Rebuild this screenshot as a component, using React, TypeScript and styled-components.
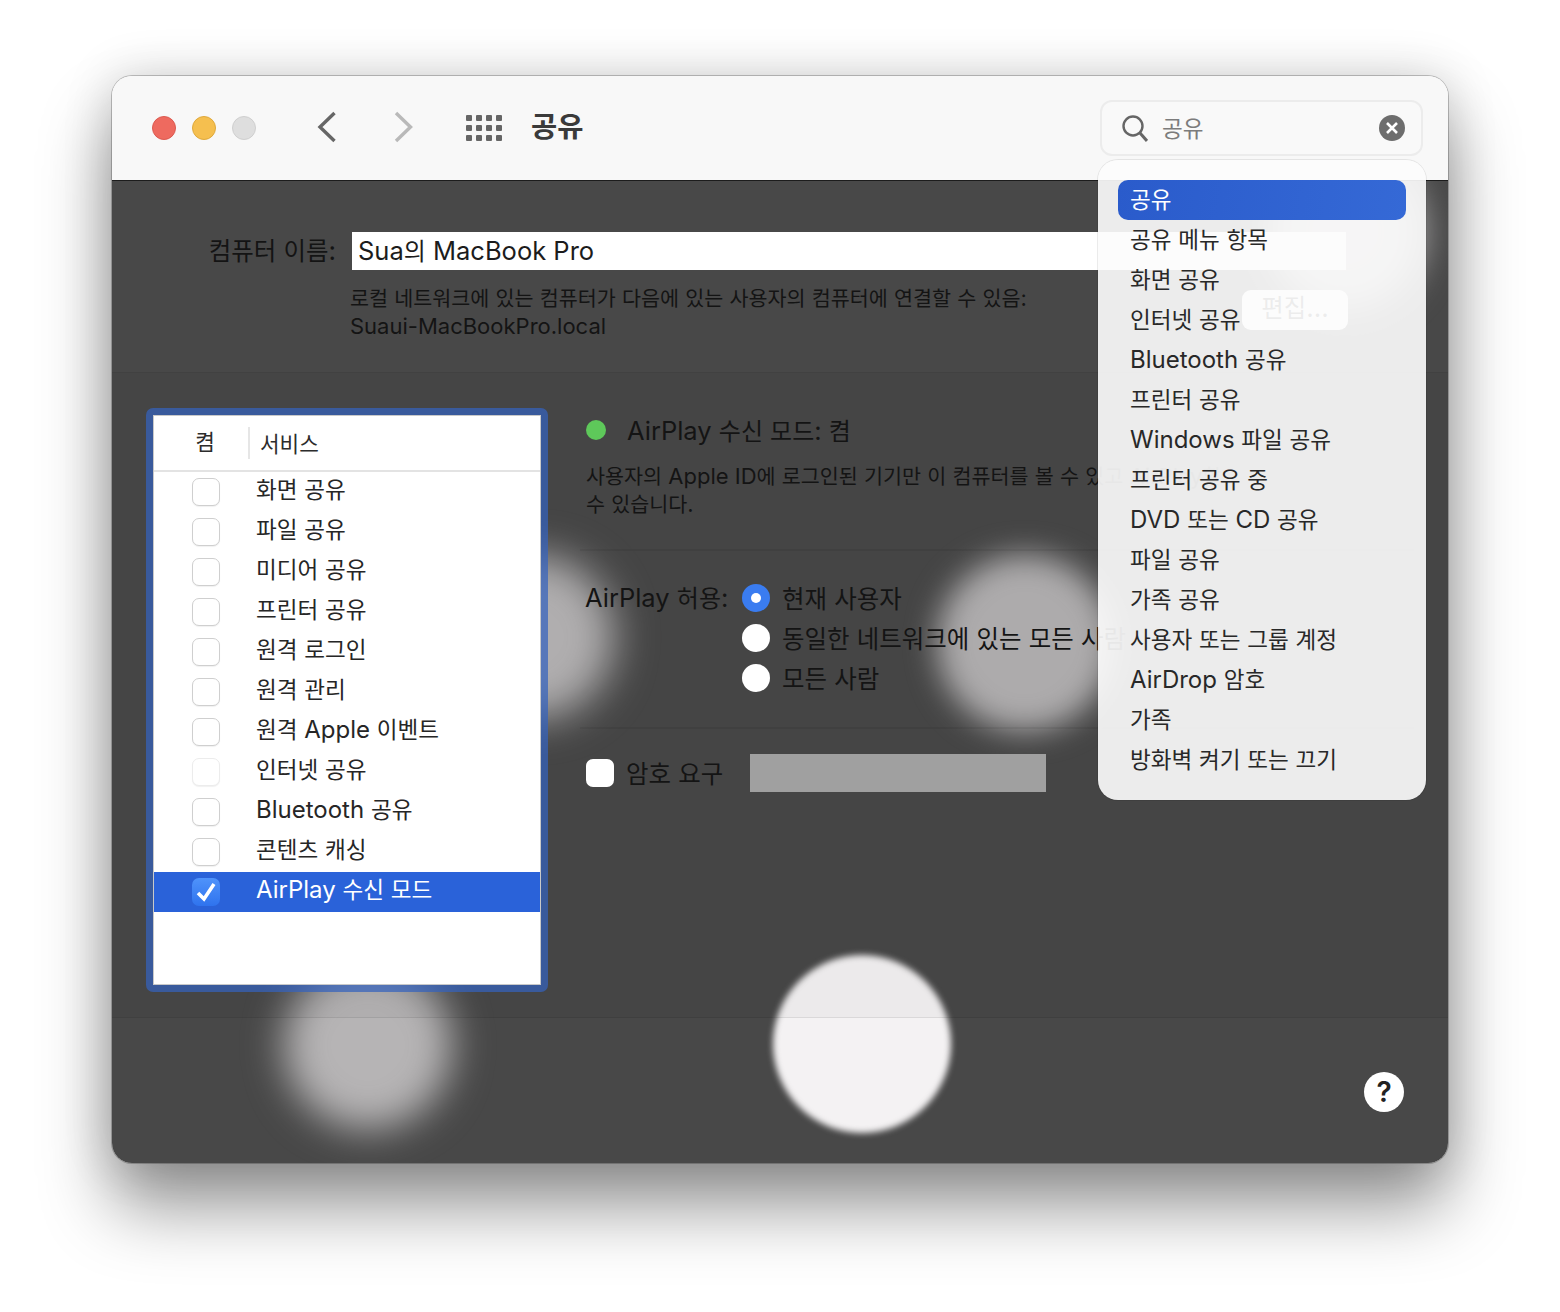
import React from 'react';
import styled, { createGlobalStyle } from 'styled-components';

const GlobalStyle = createGlobalStyle`
  html, body {
    margin: 0;
    padding: 0;
    background: #fff;
  }
  body {
    font-family: Inter, "Noto Sans CJK KR", sans-serif;
    color: #141414;
  }
`;

const Page = styled.div`
  width: 1560px;
  height: 1312px;
  padding: 76px 112px 0;
  box-sizing: border-box;
  overflow: hidden;
`;

const Window = styled.div`
  position: relative;
  width: 1336px;
  height: 1087px;
  border-radius: 20px;
  display: flex;
  flex-direction: column;
  box-shadow: 0 0 0 1px rgba(0, 0, 0, 0.22), 0 44px 70px rgba(0, 0, 0, 0.42), 0 0 50px rgba(0, 0, 0, 0.16);
`;

const TitleBar = styled.header`
  height: 105px;
  box-sizing: border-box;
  flex: none;
  display: flex;
  align-items: center;
  padding: 0 25px 0 40px;
  background: #f8f8f8;
  border-radius: 20px 20px 0 0;
  border-bottom: 1px solid #1c1c1c;
`;

const Lights = styled.div`
  display: flex;
  gap: 16px;
  margin-right: 61px;
`;

const Light = styled.span<{ $color: string; $edge: string }>`
  width: 24px;
  height: 24px;
  box-sizing: border-box;
  border-radius: 50%;
  background: ${(p) => p.$color};
  border: 1px solid ${(p) => p.$edge};
`;

const NavButton = styled.svg<{ $gap?: number }>`
  display: block;
  flex: none;
  margin: 0 0 2px ${(p) => p.$gap ?? 0}px;
`;

const GridIcon = styled.svg`
  display: block;
  flex: none;
  margin: 0 29px 1px 53px;
`;

const Title = styled.h1`
  margin: 0 0 2px;
  flex: 1;
  font-size: 28.5px;
  line-height: 40px;
  font-weight: 600;
  color: #3a3a3a;
`;

const SearchBox = styled.div`
  width: 323px;
  height: 56px;
  box-sizing: border-box;
  display: flex;
  align-items: center;
  padding: 0 16px 0 20px;
  border: 2px solid #ececec;
  border-radius: 12px;
  background: #f9f9f9;
`;

const SearchText = styled.span`
  flex: 1;
  margin-left: 14px;
  font-size: 24px;
  color: #7c7c7c;
`;

const ClearButton = styled.span`
  width: 26px;
  height: 26px;
  border-radius: 50%;
  background: #6d6d6d;
  display: flex;
  align-items: center;
  justify-content: center;
`;

const Body = styled.main`
  position: relative;
  flex: 1;
  display: flex;
  flex-direction: column;
  background: #484848;
  border-radius: 0 0 20px 20px;
  overflow: hidden;
`;

const Spot = styled.div<{ $x: number; $y: number; $r: number; $blur: number; $color: string }>`
  position: absolute;
  left: ${(p) => p.$x - p.$r}px;
  top: ${(p) => p.$y - p.$r}px;
  width: ${(p) => p.$r * 2}px;
  height: ${(p) => p.$r * 2}px;
  border-radius: 50%;
  background: ${(p) => p.$color};
  filter: blur(${(p) => p.$blur}px);
`;

const NameSection = styled.section`
  position: relative;
  height: 191px;
  flex: none;
  box-sizing: border-box;
  padding: 51px 0 0;
`;

const NameRow = styled.div`
  display: flex;
  align-items: center;
`;

const NameLabel = styled.label`
  width: 224px;
  text-align: right;
  font-size: 26px;
  margin-top: -2px;
`;

const NameInput = styled.div`
  width: 994px;
  height: 38px;
  margin-left: 16px;
  box-sizing: border-box;
  padding-left: 6px;
  background: #fff;
  font-size: 25.5px;
  line-height: 38px;
  color: #1c1c1c;
`;

const HostRow = styled.div`
  display: flex;
  justify-content: space-between;
  width: 998px;
  margin: 14px 0 0 238px;
`;

const HostText = styled.p`
  margin: 0;
  font-size: 22px;
  line-height: 28px;
`;

const EditButton = styled.span`
  width: 106px;
  height: 40px;
  margin-top: 6px;
  border-radius: 9px;
  background: #fff;
  text-align: center;
  font-size: 26px;
  line-height: 36px;
  color: #484848;
`;

const Panel = styled.section`
  position: relative;
  height: 646px;
  flex: none;
  box-sizing: border-box;
  display: flex;
  gap: 38px;
  padding: 35px 0 0 34px;
  background: rgba(0, 0, 0, 0.03);
  border-top: 1px solid rgba(0, 0, 0, 0.05);
  border-bottom: 1px solid rgba(0, 0, 0, 0.07);
`;

const ListRing = styled.div`
  width: 402px;
  height: 584px;
  flex: none;
  box-sizing: border-box;
  padding: 7px;
  border-radius: 7px;
  background: rgba(52, 98, 190, 0.72);
`;

const ListInner = styled.div`
  height: 100%;
  box-sizing: border-box;
  background: #fff;
  border: 1px solid #c9c9c9;
`;

const ListHeader = styled.div`
  height: 56px;
  box-sizing: border-box;
  display: flex;
  align-items: center;
  border-bottom: 2px solid #e3e3e3;
  font-size: 21.3px;
  color: #2c2c2c;
`;

const HeaderOn = styled.span`
  width: 96px;
  height: 32px;
  box-sizing: border-box;
  border-right: 2px solid #e6e6e6;
  text-align: center;
  line-height: 30px;
  padding-left: 8px;
`;

const HeaderName = styled.span`
  margin: -2px 0 0 10px;
`;

const ServiceRow = styled.div<{ $selected?: boolean }>`
  height: 40px;
  display: flex;
  align-items: center;
  padding-left: 38px;
  font-size: 24px;
  background: ${(p) => (p.$selected ? '#2a62d9' : 'transparent')};
  color: ${(p) => (p.$selected ? '#fff' : '#262626')};
`;

const RowText = styled.span`
  margin: -5px 0 0 36px;
`;

const Check = styled.span<{ $on?: boolean; $faint?: boolean }>`
  width: 28px;
  height: 28px;
  flex: none;
  box-sizing: border-box;
  border-radius: 7px;
  display: flex;
  align-items: center;
  justify-content: center;
  background: ${(p) => (p.$on ? 'linear-gradient(#4f93fb, #2f73ee)' : '#fff')};
  border: ${(p) => (p.$on ? 'none' : `1px solid ${p.$faint ? '#ececec' : '#cfcfcf'}`)};
  box-shadow: ${(p) => (p.$on ? 'none' : '0 1px 1px rgba(0, 0, 0, 0.06)')};
`;

const Pane = styled.div`
  width: 828px;
  flex: none;
`;

const StatusRow = styled.div`
  height: 44px;
  display: flex;
  align-items: center;
  gap: 21px;
  font-size: 25.5px;
`;

const StatusDot = styled.span`
  width: 20px;
  height: 20px;
  border-radius: 50%;
  background: #5ec85a;
`;

const Description = styled.p`
  margin: 10px 0 0;
  font-size: 22px;
  line-height: 28px;
`;

const Rule = styled.hr<{ $top?: number }>`
  height: 2px;
  margin: ${(p) => p.$top ?? 0}px 0 0 -6px;
  border: 0;
  background: rgba(0, 0, 0, 0.06);
`;

const AllowSection = styled.div`
  display: flex;
  margin-top: 27px;
  padding: 0 0 29px;
`;

const AllowLabel = styled.span`
  width: 157px;
  flex: none;
  height: 40px;
  margin-left: -1px;
  line-height: 40px;
  font-size: 25.5px;
`;

const RadioRow = styled.div`
  height: 40px;
  display: flex;
  align-items: center;
  gap: 12px;
  font-size: 26px;
`;

const Radio = styled.span<{ $on?: boolean }>`
  width: 28px;
  height: 28px;
  flex: none;
  border-radius: 50%;
  background: ${(p) => (p.$on ? '#3a7cf0' : '#fff')};
  display: flex;
  align-items: center;
  justify-content: center;
  &::after {
    content: '';
    width: 10px;
    height: 10px;
    border-radius: 50%;
    background: #fff;
  }
`;

const PasswordRow = styled.div`
  display: flex;
  align-items: center;
  margin-top: 25px;
  height: 38px;
  font-size: 26px;
`;

const PasswordCheck = styled(Check)`
  border: none;
  box-shadow: none;
  margin-right: 12px;
`;

const PasswordField = styled.div`
  width: 296px;
  height: 38px;
  margin-left: 27px;
  background: #a0a0a0;
`;

const Footer = styled.footer`
  position: relative;
  flex: 1;
  display: flex;
  justify-content: flex-end;
  padding: 54px 44px 0 0;
`;

const HelpButton = styled.span`
  width: 40px;
  height: 40px;
  border-radius: 50%;
  background: #fff;
  color: #222;
  text-align: center;
  font-size: 28px;
  line-height: 40px;
  font-weight: 600;
`;

const Menu = styled.div`
  position: absolute;
  left: 986px;
  top: 84px;
  width: 328px;
  height: 640px;
  box-sizing: border-box;
  padding: 20px;
  border-radius: 20px;
  background: rgba(252, 252, 252, 0.915);
  box-shadow: 0 0 0 1px rgba(0, 0, 0, 0.08);
`;

const MenuItem = styled.div<{ $active?: boolean }>`
  height: 40px;
  padding-left: 12px;
  border-radius: 10px;
  font-size: 24px;
  line-height: 40px;
  color: ${(p) => (p.$active ? '#fff' : '#282828')};
  background: ${(p) => (p.$active ? 'linear-gradient(100deg, #2a5bcb, #3569d6)' : 'transparent')};
`;

// hangul sets a little narrower than latin in the reference
const Hangul = styled.span`
  font-size: 0.94em;
  line-height: 1;
`;

const Ko: React.FC<{ children: string }> = ({ children }) => (
  <>
    {children.split(/([\uAC00-\uD7A3]+)/).map((part, i) =>
      i % 2 === 1 ? <Hangul key={i}>{part}</Hangul> : part
    )}
  </>
);

const services = [
  '화면 공유',
  '파일 공유',
  '미디어 공유',
  '프린터 공유',
  '원격 로그인',
  '원격 관리',
  '원격 Apple 이벤트',
  '인터넷 공유',
  'Bluetooth 공유',
  '콘텐츠 캐싱',
];

const menuItems = [
  '공유 메뉴 항목',
  '화면 공유',
  '인터넷 공유',
  'Bluetooth 공유',
  '프린터 공유',
  'Windows 파일 공유',
  '프린터 공유 중',
  'DVD 또는 CD 공유',
  '파일 공유',
  '가족 공유',
  '사용자 또는 그룹 계정',
  'AirDrop 암호',
  '가족',
  '방화벽 켜기 또는 끄기',
];

const dots = [0, 1, 2, 3].flatMap((col) => [0, 1, 2].map((row) => ({ col, row })));

const App: React.FC = () => {
  return (
    <Page>
      <GlobalStyle />
      <Window>
        <TitleBar>
          <Lights>
            <Light $color="#ee6a5f" $edge="#dc5a50" />
            <Light $color="#f5bf4f" $edge="#dfa93c" />
            <Light $color="#dedede" $edge="#cfcfcf" />
          </Lights>
          <NavButton width="20" height="32" viewBox="0 0 20 32" fill="none" stroke="#666" strokeWidth="3.4">
            <path d="M17.5 2 3 16l14.5 14" />
          </NavButton>
          <NavButton $gap={56} width="20" height="32" viewBox="0 0 20 32" fill="none" stroke="#b9b9b9" strokeWidth="3.4">
            <path d="m3 2 14.5 14L3 30" />
          </NavButton>
          <GridIcon width="36" height="26" viewBox="0 0 36 26" fill="#666">
            {dots.map((d) => (
              <rect key={`${d.col}-${d.row}`} x={d.col * 10} y={d.row * 10} width="6" height="6" rx="1" />
            ))}
          </GridIcon>
          <Title>공유</Title>
          <SearchBox>
            <svg width="26" height="27" viewBox="0 0 26 27" fill="none" stroke="#666" strokeWidth="2.4">
              <circle cx="11" cy="11" r="9.5" />
              <path d="m18 18 7 8" strokeWidth="3" />
            </svg>
            <SearchText>
              <Ko>공유</Ko>
            </SearchText>
            <ClearButton>
              <svg width="12" height="12" viewBox="0 0 12 12" stroke="#fff" strokeWidth="2.6">
                <path d="m1 1 10 10M11 1 1 11" />
              </svg>
            </ClearButton>
          </SearchBox>
        </TitleBar>
        <Body>
          <Spot $x={420} $y={456} $r={82} $blur={20} $color="#b6b4b5" />
          <Spot $x={913} $y={462} $r={88} $blur={15} $color="#b3b1b2" />
          <Spot $x={256} $y={864} $r={84} $blur={19} $color="#b6b4b5" />
          <Spot $x={750} $y={863} $r={89} $blur={3} $color="#f4f2f3" />
          <Spot $x={1233} $y={51} $r={78} $blur={18} $color="#b4b2b3" />
          <NameSection>
            <NameRow>
              <NameLabel>
                <Ko>컴퓨터 이름:</Ko>
              </NameLabel>
              <NameInput>
                <Ko>Sua의 MacBook Pro</Ko>
              </NameInput>
            </NameRow>
            <HostRow>
              <HostText>
                <Ko>로컬 네트워크에 있는 컴퓨터가 다음에 있는 사용자의 컴퓨터에 연결할 수 있음:</Ko>
                <br />
                Suaui-MacBookPro.local
              </HostText>
              <EditButton>
                <Ko>편집...</Ko>
              </EditButton>
            </HostRow>
          </NameSection>
          <Panel>
            <ListRing>
              <ListInner>
                <ListHeader>
                  <HeaderOn>켬</HeaderOn>
                  <HeaderName>서비스</HeaderName>
                </ListHeader>
                {services.map((name) => (
                  <ServiceRow key={name}>
                    <Check $faint={name === '인터넷 공유'} />
                    <RowText>
                      <Ko>{name}</Ko>
                    </RowText>
                  </ServiceRow>
                ))}
                <ServiceRow $selected>
                  <Check $on>
                    <svg width="20" height="20" viewBox="0 0 20 20" fill="none" stroke="#fff" strokeWidth="3.6">
                      <path d="m2 11 6 6L18 2" />
                    </svg>
                  </Check>
                  <RowText>
                    <Ko>AirPlay 수신 모드</Ko>
                  </RowText>
                </ServiceRow>
              </ListInner>
            </ListRing>
            <Pane>
              <StatusRow>
                <StatusDot />
                <span>
                  <Ko>AirPlay 수신 모드: 켬</Ko>
                </span>
              </StatusRow>
              <Description>
                <Ko>사용자의 Apple ID에 로그인된 기기만 이 컴퓨터를 볼 수 있고 AirPlay할</Ko>
                <br />
                <Ko>수 있습니다.</Ko>
              </Description>
              <Rule $top={31} />
              <AllowSection>
                <AllowLabel>
                  <Ko>AirPlay 허용:</Ko>
                </AllowLabel>
                <div>
                  <RadioRow>
                    <Radio $on />
                    <span>
                      <Ko>현재 사용자</Ko>
                    </span>
                  </RadioRow>
                  <RadioRow>
                    <Radio />
                    <span>
                      <Ko>동일한 네트워크에 있는 모든 사람</Ko>
                    </span>
                  </RadioRow>
                  <RadioRow>
                    <Radio />
                    <span>
                      <Ko>모든 사람</Ko>
                    </span>
                  </RadioRow>
                </div>
              </AllowSection>
              <Rule />
              <PasswordRow>
                <PasswordCheck />
                <span>
                  <Ko>암호 요구</Ko>
                </span>
                <PasswordField />
              </PasswordRow>
            </Pane>
          </Panel>
          <Footer>
            <HelpButton>?</HelpButton>
          </Footer>
        </Body>
        <Menu>
          <MenuItem $active>
            <Ko>공유</Ko>
          </MenuItem>
          {menuItems.map((item) => (
            <MenuItem key={item}>
              <Ko>{item}</Ko>
            </MenuItem>
          ))}
        </Menu>
      </Window>
    </Page>
  );
};

export default App;
